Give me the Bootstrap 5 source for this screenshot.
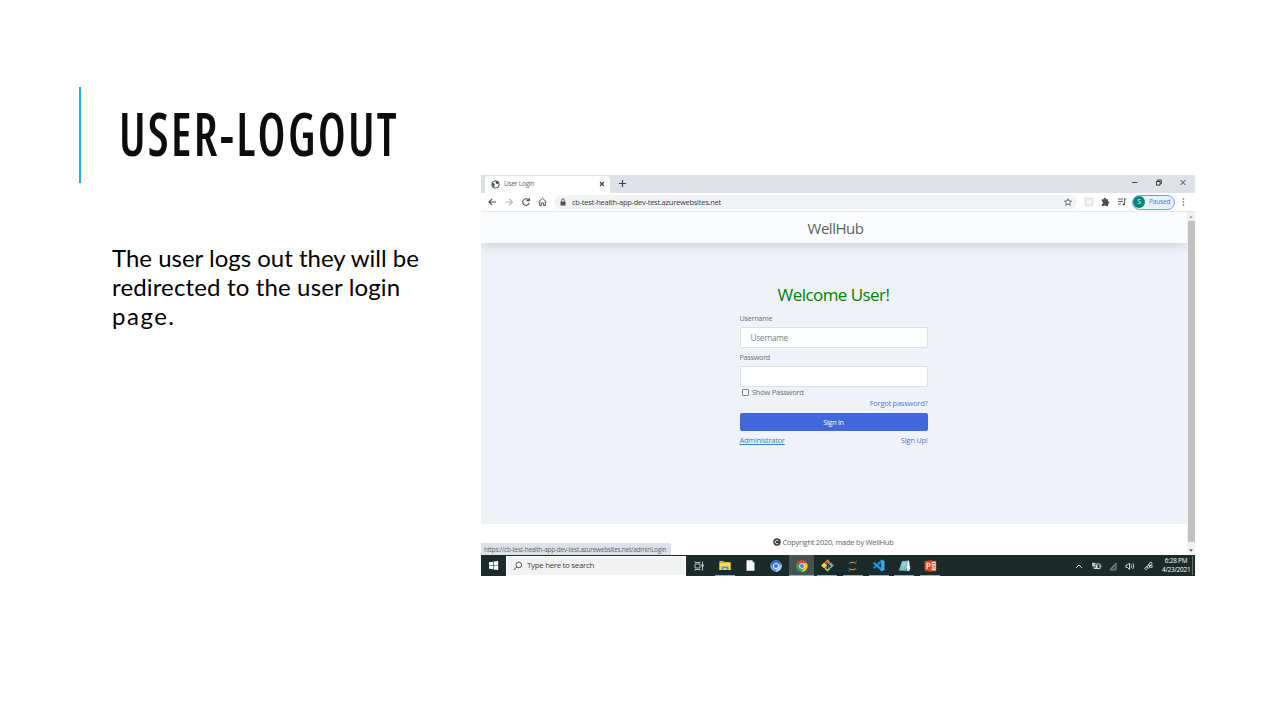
<!DOCTYPE html>
<html lang="en">
<head>
<meta charset="utf-8">
<meta name="viewport" content="width=device-width, initial-scale=1">
<title>User-Logout</title>
<link rel="stylesheet" href="https://cdn.jsdelivr.net/npm/bootstrap@5.3.0/dist/css/bootstrap.min.css">
<style>
body{width:1280px;height:720px;overflow:hidden;background:#fff;font-family:"Open Sans","Noto Sans",sans-serif;color:#000}
svg{display:block;flex:none;overflow:visible}
.copy{width:481px;padding:87px 0 0 79px}
.headline{height:96px;border-left:2px solid #1cade4;padding-left:38px}
.headline h1{font:600 60px/92px "Open Sans",sans-serif;font-stretch:75%;letter-spacing:2.8px;color:#0d0d0d;white-space:nowrap;transform:scaleX(.82);transform-origin:0 50%}
.blurb{margin:60px 0 0 33px;font:24px/29px Lato,sans-serif;white-space:nowrap}
.blurb .l2{letter-spacing:.15px}
.blurb .l3{letter-spacing:1.5px}
.shot{width:714px;height:401px;margin-top:175px;font-size:7.5px;line-height:10px;color:#5f6368}
.shot *{letter-spacing:-.033em}
.tabs{height:18px;background:#dee1e6}
.tab{width:125px;height:17px;margin:1px 0 0 4px;padding:0 5px 1px 6px;background:#fff;border-radius:4px 4px 0 0}
.tools{height:18px;background:#fff}
.omni{width:523px;height:14px;margin-left:5px;padding-left:6px;background:#f1f3f4;border-radius:7px;color:#3c4043}
.profile{width:43px;height:15px;margin-left:4px;border:1px solid #6ba0ee;border-radius:8px;background:#eaf1fd;color:#4a7de0}
.avatar{width:12px;height:12px;background:#00897b;color:#fff;border-radius:50%;font-size:6.5px;line-height:12px}
.view{height:344px;border-top:1px solid #e3e6ea}
.pagebody{background:#eff3f7;overflow:hidden}
.brandbar{height:31px;background:#fbfcfe;box-shadow:0 2px 12px rgba(58,70,90,.22);font-size:15px;line-height:33px;color:#5a6068;padding-left:3px}
.login{width:188px;margin:0 auto;color:#6a7078;position:relative;left:-.5px}
.login h2{font-size:17px;line-height:20px;font-weight:400;color:#008000;margin:42px 0 8px}
.login label{display:block;font-size:7.2px;line-height:10px}
.field{height:21px;padding:0 10px;font-size:8.2px;line-height:20px;background:#fff;border:1px solid #dbe0e6;border-radius:2px;color:#7b828a}
.box{width:7px;height:7px;border:1px solid #858585;border-radius:1px;background:#fff;margin:0 3px 0 2.5px}
.login .signin{height:18px;padding:0;border:0;border-radius:2px;background:#4169d9;color:#fff;font-size:7.2px;line-height:17px}
.link{color:#5277dc}
.footbar{height:31px;background:#fff;padding:5px 2px 0 0}
.status{left:0;bottom:0;width:190px;height:12px;padding-left:3px;background:#dee1e6;border-top-right-radius:2px;font-size:6.4px;line-height:13px;color:#5f6368;white-space:nowrap}
.scroll{width:8px;background:#f1f1f1}
.thumb{width:7px;background:#c1c1c1}
.task{height:21px;background:#1a2b29;color:#fff}
.search{width:180px;height:20px;background:#f2f2f2;border:1px solid #fff;color:#444;font-size:8px;padding-left:6px}
.slot{width:25.7px;height:21px;display:flex;align-items:center;justify-content:center}
.run{background:linear-gradient(#76b9ed,#76b9ed) center bottom/20px 1px no-repeat}
.live{background-color:#465351;background-size:100% 1px}
.clock{font-size:6.4px;line-height:9.2px;width:31px;padding:0 2px 1px 0;border-right:1px solid #64706e;white-space:nowrap}
</style>
</head>
<body>
<main class="d-flex">
<section class="copy flex-shrink-0">
  <div class="headline"><h1 class="m-0">USER-LOGOUT</h1></div>
  <p class="blurb"><span class="l1">The user logs out they will be</span><br><span class="l2">redirected to the user login</span><br><span class="l3">page.</span></p>
</section>

<section class="shot d-flex flex-column flex-shrink-0">
  <div class="tabs d-flex">
    <div class="tab d-flex align-items-center">
      <svg width="9" height="9" viewBox="0 0 9 9"><circle cx="4.5" cy="4.5" r="3.7" fill="#fff" stroke="#4d5156"/><path d="M1 3l2 .2 1 1.2-.8 1.2.4 2L1.5 6zM4 .8l3 .5.9 2-1.700 1-1.700-1L5 2z" fill="#4d5156"/></svg>
      <span style="margin-left:4px;font-size:6.5px">User Login</span>
      <svg class="ms-auto" width="6" height="6" viewBox="0 0 6 6"><path d="M1 1l4 4M5 1L1 5" stroke="#3c4043" stroke-width="1.1"/></svg>
    </div>
    <svg class="align-self-center" style="margin-left:9px;margin-bottom:1px" width="7" height="7" viewBox="0 0 7 7"><path d="M3.500 0v7M0 3.500h7" stroke="#3c4043" stroke-width="1.200"/></svg>
    <svg class="ms-auto" width="66" height="16" viewBox="0 0 66 16"><path d="M3 7.500h5.500M51.500 5l5 5M56.500 5l-5 5" stroke="#333" stroke-width=".9"/><path d="M27.500 6.500h3.600v3.600h-3.600zM28.700 6V5h3.600v3.600h-1" fill="none" stroke="#222" stroke-width=".9"/></svg>
  </div>
  <div class="tools d-flex align-items-center">
    <svg width="68" height="14" viewBox="0 0 68 14" fill="none" stroke="#4d5156" stroke-width="1.1"><path d="M15 7H8.200M11.200 3.800L8 7l3.200 3.200"/><path d="M24.500 7h6.800M28.200 3.800L31.500 7l-3.300 3.200" stroke="#b0b3b7"/><path d="M47.600 5A3.300 3.300 0 1 0 48.200 8M48.300 3v2.600h-2.700"/><path d="M57.500 7L61.500 3.200 65.500 7M58.700 6.500v4h1.700V8h2.200v2.500h1.700v-4" stroke-width="1"/></svg>
    <div class="omni d-flex align-items-center">
      <svg width="6" height="8" viewBox="0 0 6 8"><path d="M.5 3.500h5v4h-5z" fill="#4d5156"/><path d="M1.600 3.500V2.300a1.400 1.400 0 0 1 2.800 0v1.200" fill="none" stroke="#4d5156" stroke-width=".9"/></svg>
      <span style="margin-left:6px">cb-test-health-app-dev-test.azurewebsites.net</span>
      <svg class="ms-auto" style="margin-right:5px" width="8" height="8" viewBox="0 0 8 8"><path d="M4 .8l1 2.200 2.500.2-1.900 1.700.6 2.400L4 6 1.800 7.300l.6-2.400L.5 3.200 3 3z" fill="none" stroke="#4d5156" stroke-width=".8"/></svg>
    </div>
    <svg width="50" height="14" viewBox="0 0 50 14"><path d="M8 3h8v8H8z" fill="#ededed" stroke="#d9d9d9" stroke-width=".7"/><path d="M9.500 7h5" stroke="#fff" stroke-width="1.500"/><path d="M24.800 4.300h2a1.200 1.200 0 1 1 2.300 0h1.900v2a1.200 1.200 0 1 1 0 2.400v2.400h-2.100a1.200 1.200 0 0 0-2.200 0h-1.900V9a1.200 1.200 0 0 0 0-2.400z" fill="#4d5156"/><path d="M41 4h5M41 6.500h5M41 9h3M47.500 3.500V10M47.500 4h1.800" stroke="#4d5156" stroke-width=".9" fill="none"/><circle cx="46.600" cy="9.500" r="1.100" fill="#4d5156"/></svg>
    <div class="profile d-flex align-items-center" style="margin-left:5px"><div class="avatar text-center">S</div><span style="margin-left:4px;font-size:6.600px">Paused</span></div>
    <svg style="margin-left:7px" width="3" height="8" viewBox="0 0 3 8" fill="#4d5156"><circle cx="1.500" cy="1" r=".8"/><circle cx="1.500" cy="4" r=".8"/><circle cx="1.500" cy="7" r=".8"/></svg>
  </div>

  <div class="view d-flex position-relative">
    <div class="flex-grow-1 d-flex flex-column">
      <div class="pagebody flex-grow-1">
        <div class="brandbar text-center">WellHub</div>
        <form class="login" onsubmit="return false">
          <h2 class="text-center">Welcome User!</h2>
          <label style="margin-bottom:4px">Username</label>
          <div class="field">Username</div>
          <label style="margin:4px 0">Password</label>
          <div class="field"></div>
          <div class="d-flex align-items-center" style="height:11px"><span class="box"></span><span style="margin-top:-1px">Show Password</span></div>
          <div class="link text-end" style="height:15px;line-height:11px">Forgot password?</div>
          <button class="btn signin w-100 d-block">Sign in</button>
          <div class="d-flex justify-content-between" style="margin-top:3.500px"><span class="text-decoration-underline" style="color:#3d7ec6">Administrator</span><span class="link">Sign Up!</span></div>
        </form>
      </div>
      <div class="footbar d-flex align-items-center justify-content-center"><svg width="8" height="8" viewBox="0 0 8 8"><circle cx="4" cy="4" r="3.700" fill="#343a40"/><path d="M5.400 2.900a1.800 1.800 0 1 0 0 2.200" fill="none" stroke="#fff" stroke-width=".9"/></svg><span style="margin-left:2px">Copyright 2020, made by WellHub</span></div>
    </div>
    <div class="scroll d-flex flex-column align-items-center">
      <svg width="8" height="9" viewBox="0 0 8 9"><path d="M2.200 5.800L4 4l1.800 1.800z" fill="#8b8b8b"/></svg>
      <div class="thumb flex-grow-1"></div>
      <svg width="8" height="13" viewBox="0 0 8 13"><path d="M2 7.500h4L4 9.500z" fill="#444"/></svg>
    </div>
    <div class="status position-absolute">https://cb-test-health-app-dev-test.azurewebsites.net/adminLogin</div>
  </div>

  <div class="task d-flex align-items-center">
    <svg width="25" height="21" viewBox="0 0 25 21" fill="#fff"><path d="M8 7.300l4-.6v3.500H8zM12.600 6.600l4.600-.7v4.300h-4.600zM8 10.800h4v3.500l-4-.6zM12.600 10.800h4.600v4.300l-4.600-.7z"/></svg>
    <div class="search d-flex align-items-center"><svg width="10" height="10" viewBox="0 0 10 10"><circle cx="5.800" cy="3.900" r="2.800" fill="none" stroke="#333" stroke-width=".8"/><path d="M3.800 5.900L.8 9" stroke="#333" stroke-width=".9"/></svg><span style="margin:-1px 0 0 4px;letter-spacing:-.35px">Type here to search</span></div>
    <div class="slot"><svg width="10" height="10" viewBox="0 0 10 10" fill="none" stroke="#ddd" stroke-width=".8"><path d="M1 3h5v4H1zM1 .5v1h5v-1M1 9.500v-1h5v1M8.500.5v9M7.800 3.500h1.400v2H7.800z"/></svg></div>
    <div class="slot run"><svg width="12" height="11" viewBox="0 0 12 11"><path d="M.5 1h4l1 1h6v8H.5z" fill="#e8a91b"/><path d="M.5 3h11v7H.5z" fill="#ffd85e"/><path d="M2.500 10V6.500h7V10h-2V8h-3v2z" fill="#3a9be0"/></svg></div>
    <div class="slot"><svg width="9" height="11" viewBox="0 0 9 11"><path d="M.5.200h5.500l2.500 2.500v8.100h-8z" fill="#f8f8f8"/><path d="M6 .2v2.500h2.500" fill="#bbb"/></svg></div>
    <div class="slot"><svg width="12" height="12" viewBox="0 0 12 12"><circle cx="6" cy="6" r="5.700" fill="#6d9cee"/><path d="M1 3.200A5.700 5.700 0 0 1 11.200 3.700L6 3.400 3.500 7.200z" fill="#3a6fcc"/><path d="M11.300 4A5.700 5.700 0 0 1 5.500 11.700L8.300 7.200z" fill="#a9c7fa"/><circle cx="6" cy="6" r="2.900" fill="#e8f0fe"/><circle cx="6" cy="6" r="2.100" fill="#3d73d8"/></svg></div>
    <div class="slot run live"><svg width="12" height="12" viewBox="0 0 12 12"><circle cx="6" cy="6" r="5.700" fill="#3aa757"/><path d="M1.100 3.100A5.700 5.700 0 0 1 11 3.300H6L3.600 7.300z" fill="#ea4335"/><path d="M11 3.300A5.700 5.700 0 0 1 5.500 11.700L8.400 7.300 7 3.300z" fill="#fbc116"/><circle cx="6" cy="6" r="2.700" fill="#fff"/><circle cx="6" cy="6" r="2.100" fill="#4285f4"/></svg></div>
    <div class="slot run"><svg width="13" height="13" viewBox="0 0 13 13"><g transform="rotate(45 6.500 6.500)"><path d="M2 2h4.300v4.300H2z" fill="#ef6a50"/><path d="M6.700 2H11v4.300H6.700z" fill="#5bb2e8"/><path d="M2 6.700h4.300V11H2z" fill="#f7d44c"/><path d="M6.700 6.700H11V11H6.700z" fill="#92c353"/></g><path d="M5 3.300l1.500 1.500v4.700M6.500 5.200l2.100 1.700" stroke="#1a2b29" fill="none"/><circle cx="6.500" cy="9" r="1" fill="#1a2b29"/><circle cx="8.700" cy="7" r="1" fill="#1a2b29"/></svg></div>
    <div class="slot run"><svg width="11" height="12" viewBox="0 0 11 12" fill="#f08030"><path d="M1.500 4.200C2.500.8 8.500.8 9.500 4.200 7.500 2.600 3.500 2.600 1.500 4.200zM1.500 7.800c1 3.400 7 3.400 8 0-2 1.600-6 1.600-8 0z"/><circle cx="9.200" cy="1.300" r=".6" fill="#999"/><circle cx="2" cy="11" r=".6" fill="#999"/></svg></div>
    <div class="slot run"><svg width="13" height="13" viewBox="0 0 13 13"><path d="M9.500.5v3.600L2.500 10 .8 8.500z" fill="#1684cf"/><path d="M.8 4.300L2.500 3l7 6v3.500z" fill="#2196e3"/><path d="M9.300.500l3.200 1.400v9.200l-3.200 1.400z" fill="#35aef5"/></svg></div>
    <div class="slot run"><svg width="13" height="12" viewBox="0 0 13 12"><path d="M4.500 1.200L11 .5l1.300 8.500-2.500 2z" fill="#e8eef0"/><path d="M4 1h6L8 10.500H.8z" fill="#74bbc8"/><path d="M4.300 2.800h4.200M3.800 4.500H8M3.200 6.200h4.400" stroke="#c1e4e9" stroke-width=".7"/><path d="M8 10.500l2.700-.8L12 11H1z" fill="#d5dadb"/></svg></div>
    <div class="slot run"><svg width="13" height="12" viewBox="0 0 13 12"><path d="M6 1.200h6v9.600H6z" fill="#fbe3dd" stroke="#d24726" stroke-width=".8"/><path d="M8.300 3.500h2.500M8.300 6h2.500M8.300 8h2.500" stroke="#d24726"/><path d="M.5 1.200L7.700 0v12L.5 10.800z" fill="#d24726"/><path d="M3 9V3.300h1.500a1.500 1.500 0 0 1 0 3H3" fill="none" stroke="#fff" stroke-width="1.100"/></svg></div>
    <svg class="ms-auto" width="83" height="14" viewBox="0 0 83 14" fill="none" stroke="#e4e8e7" stroke-width=".9"><path d="M1 9l3-3 3 3"/><path d="M19 5h6v4.500H19zM25.900 6.300v2M17 4.300h3M17 6.200h3M18 4v3.500"/><path d="M20.500 6h2v3h-2z" fill="#e4e8e7" stroke="none"/><path d="M35 10.500L41 4v7h-6M36.800 10.500c0-2 1.700-3.700 4-4M38.800 10.500c0-1 1-2 2-2" stroke="#aab3b1" stroke-width=".7"/><path d="M51 6h1.500l2-2v6.500l-2-2H51zM56 5.500c.8 1 .8 2.500 0 3.500M57.700 4.300c1.300 1.800 1.300 4 0 5.700"/><path d="M70 10.500c-1-.8 1-3.500 2.200-2.600s-.6 3.400-1.500 2.400M71.500 8.500L75.500 3l1.700 1.200-3.500 4.300M73 6.200l5 .8M74 9.500c.8-1.800 3-1.700 3.500-.5"/></svg>
    <div class="clock text-center ms-1">6:28 PM<br>4/23/2021</div>
    <div style="width:2px"></div>
  </div>
</section>
</main>
<script src="https://cdn.jsdelivr.net/npm/bootstrap@5.3.0/dist/js/bootstrap.bundle.min.js"></script>
</body>
</html>
